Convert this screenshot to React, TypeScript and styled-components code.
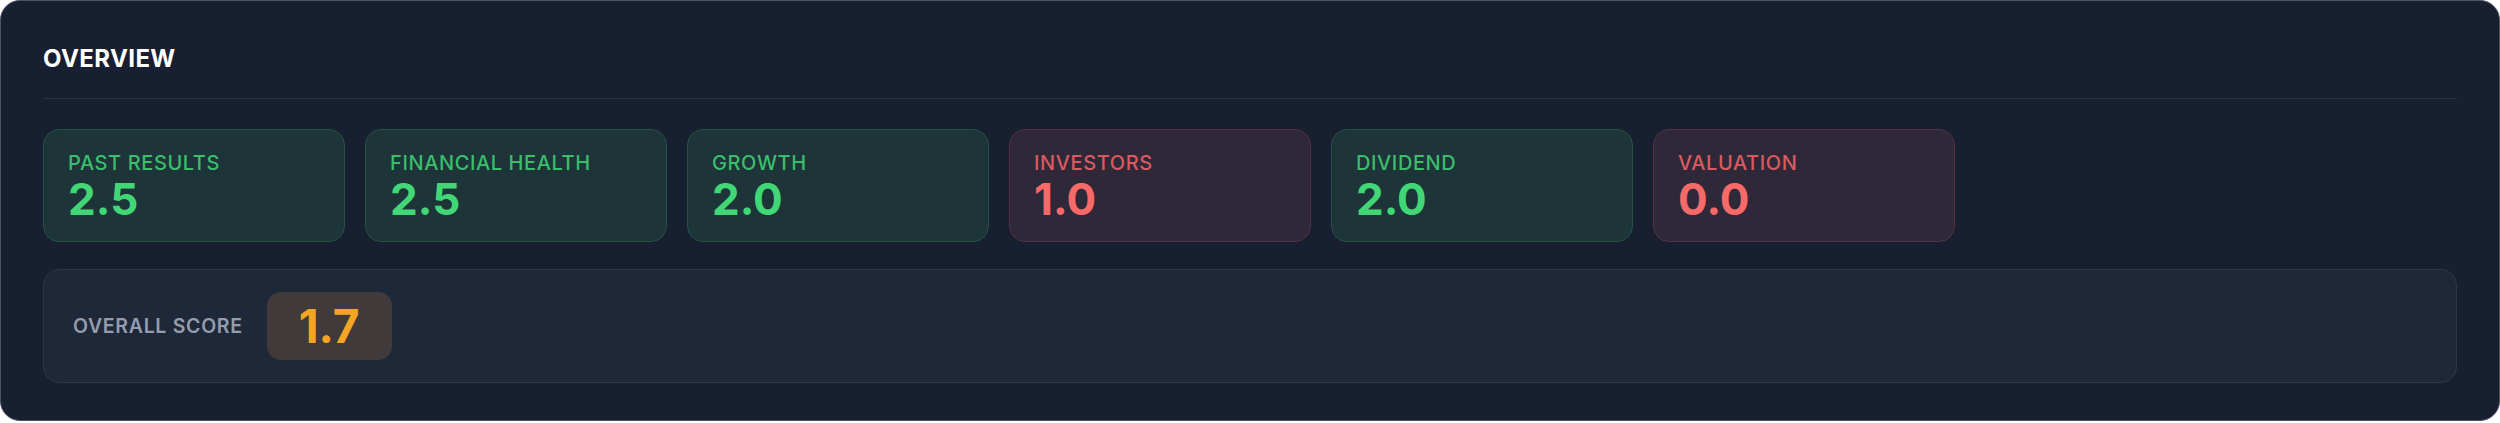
import styled, { createGlobalStyle } from "styled-components";

type Tone = "good" | "bad";

interface Metric {
  label: string;
  value: number;
  tone: Tone;
}

const metrics: Metric[] = [
  { label: "Past Results", value: 2.5, tone: "good" },
  { label: "Financial Health", value: 2.5, tone: "good" },
  { label: "Growth", value: 2.0, tone: "good" },
  { label: "Investors", value: 1.0, tone: "bad" },
  { label: "Dividend", value: 2.0, tone: "good" },
  { label: "Valuation", value: 0.0, tone: "bad" },
];

const tones = {
  good: { bg: "#1d3439", border: "#245243", label: "#3cbd6c", value: "#41d776" },
  bad: { bg: "#2f2838", border: "#553141", label: "#d95a60", value: "#f86a6a" },
};

const GlobalStyle = createGlobalStyle`
  * {
    box-sizing: border-box;
  }
  body {
    margin: 0;
    background: #ffffff;
    font-family: Inter, "Noto Sans", sans-serif;
  }
`;

export default function App() {
  const overall =
    metrics.reduce((sum, m) => sum + m.value, 0) / metrics.length;

  return (
    <>
      <GlobalStyle />
      <Panel>
        <Header>
          <Title>Overview</Title>
        </Header>

        <CardRow>
          {metrics.map((m) => (
            <ScoreCard key={m.label} tone={m.tone}>
              <CardLabel tone={m.tone}>{m.label}</CardLabel>
              <CardValue tone={m.tone}>{m.value.toFixed(1)}</CardValue>
            </ScoreCard>
          ))}
        </CardRow>

        <OverallBox>
          <OverallLabel>Overall Score</OverallLabel>
          <OverallBadge>{overall.toFixed(1)}</OverallBadge>
        </OverallBox>
      </Panel>
    </>
  );
}

/* outer panel */
const Panel = styled.section`
  width: 100%;
  background: #171f31;
  border: 1px solid #4d5466;
  border-radius: 20px;
  padding: 40px 42px 37px 42px;
  display: flex;
  flex-direction: column;
`;

const Header = styled.div`
  padding-bottom: 21px;
  border-bottom: 1px solid #283245;
  margin-bottom: 30px;
`;

const Title = styled.h2`
  margin: 0;
  color: #ffffff;
  font-size: 24px;
  line-height: 36px;
  font-weight: 700;
  letter-spacing: 0.4px;
  text-transform: uppercase;
`;

/* metric cards */
const CardRow = styled.div`
  display: flex;
  gap: 20px;
  margin-bottom: 27px;
`;

const ScoreCard = styled.div<{ tone: Tone }>`
  width: 302px;
  height: 113px;
  display: flex;
  flex-direction: column;
  padding: 21px 24px 0 24px;
  border-radius: 16px;
  background: ${({ tone }) => tones[tone].bg};
  border: 1px solid ${({ tone }) => tones[tone].border};
`;

const CardLabel = styled.div<{ tone: Tone }>`
  color: ${({ tone }) => tones[tone].label};
  font-size: 20px;
  line-height: 24px;
  font-weight: 500;
  letter-spacing: 0.6px;
  text-transform: uppercase;
`;

const CardValue = styled.div<{ tone: Tone }>`
  color: ${({ tone }) => tones[tone].value};
  font-size: 44px;
  line-height: 48px;
  font-weight: 700;
`;

/* overall score strip */
const OverallBox = styled.div`
  display: flex;
  align-items: center;
  gap: 24px;
  height: 114px;
  padding: 0 29px;
  background: #1f2839;
  border: 1px solid #2e3749;
  border-radius: 16px;
`;

const OverallLabel = styled.span`
  color: #959dac;
  font-size: 19.5px;
  font-weight: 600;
  letter-spacing: 0.7px;
  text-transform: uppercase;
`;

const OverallBadge = styled.span`
  display: inline-flex;
  align-items: center;
  justify-content: center;
  height: 68px;
  padding: 0 32px;
  border-radius: 14px;
  background: #403b3a;
  color: #f5a524;
  font-size: 46px;
  font-weight: 700;
`;
